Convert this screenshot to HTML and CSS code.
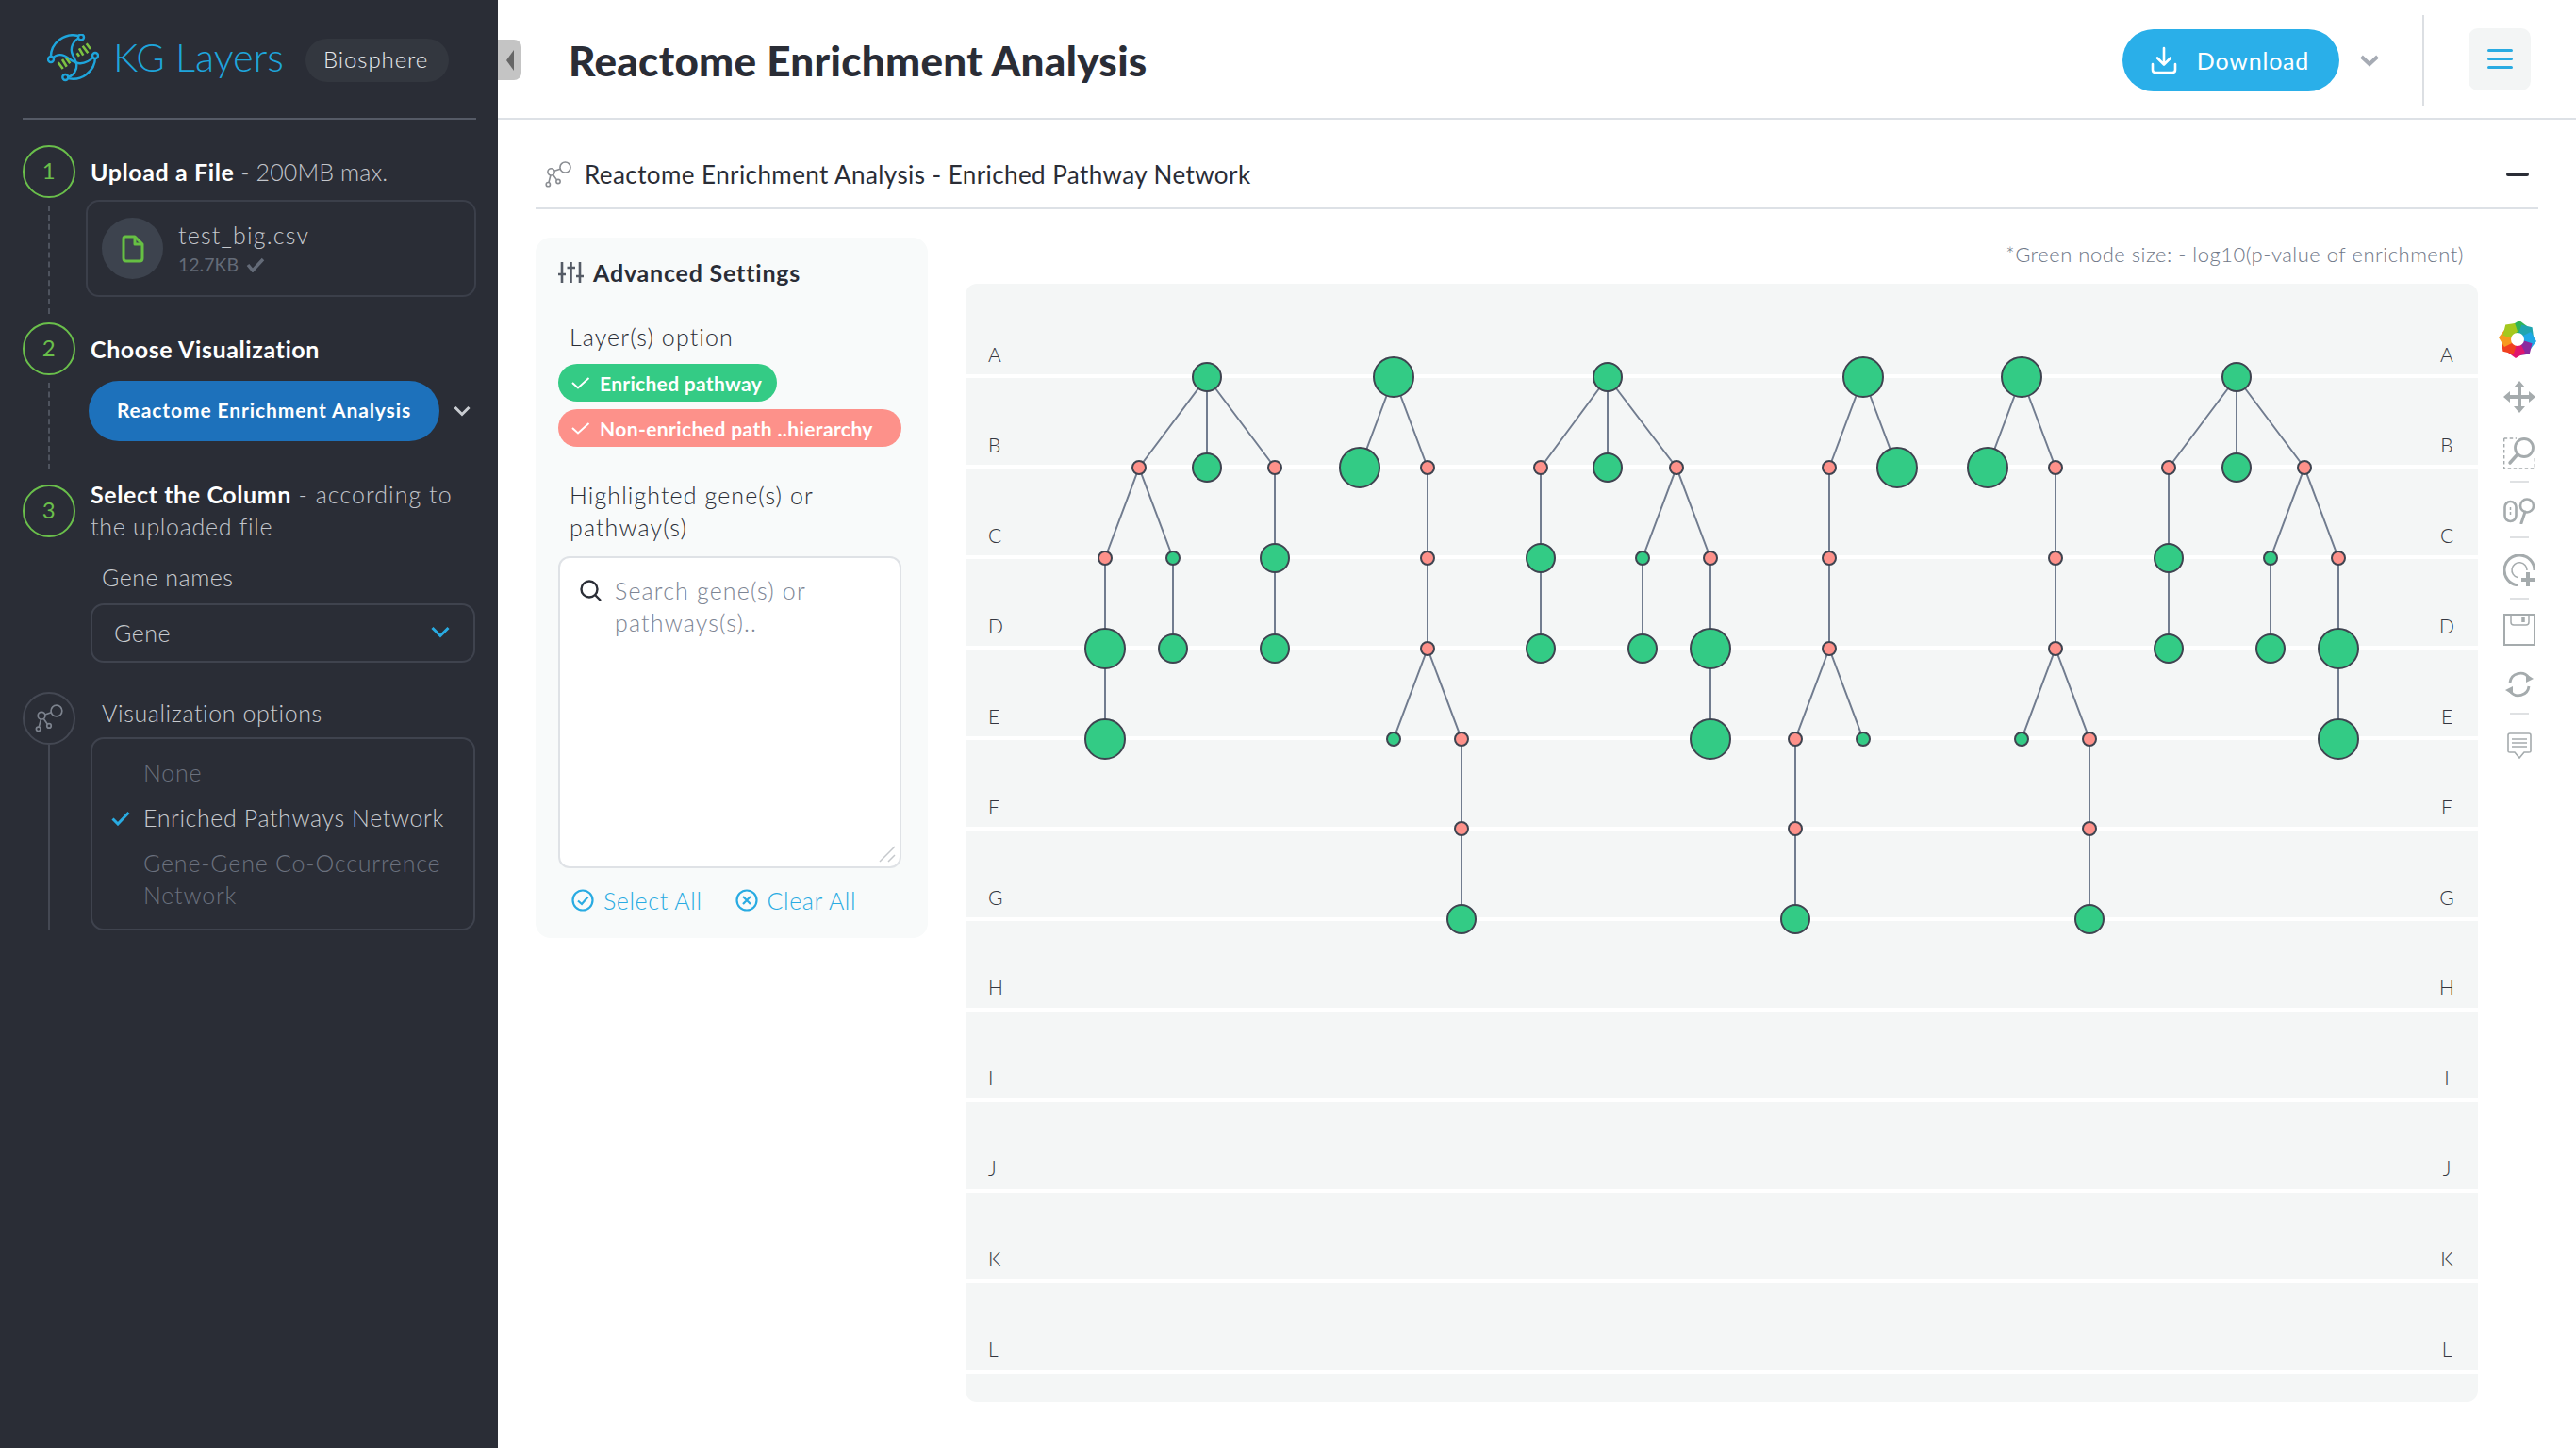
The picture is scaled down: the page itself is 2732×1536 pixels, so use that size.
FILE: index.html
```html
<!DOCTYPE html>
<html lang="en">
<head>
  <meta charset="UTF-8">
  <title>KG Layers</title>
  <link rel="stylesheet" href="styles.css">
</head>
<body>

  <svg class="defs" width="0" height="0">
    <symbol id="net" viewBox="0 0 30 30">
      <circle cx="22" cy="8" r="5.2"/>
      <circle cx="8" cy="12.5" r="3.4"/>
      <circle cx="5" cy="25" r="2"/>
      <circle cx="15" cy="22" r="2"/>
      <path d="M17 9.5L11.3 11.5M7.4 16L5.6 23M10 15.5L13.6 20.5"/>
    </symbol>
  </svg>

  <aside class="sidebar">
    <div class="brand">
      <svg class="logo" viewBox="0 0 55 51">
        <g fill="none" stroke="#1ea5dc" stroke-width="2.4">
          <path d="M4 27A23.500 23.500 0 0 1 36 3"/>
          <path d="M51 23A23.500 23.500 0 0 1 19 46"/>
          <path d="M36 3C27 7 24 15 27 22C30 29 34 33 29 41C27 44 23 46 19 46"/>
          <path d="M4 27C8 23 13 21 18 23C23 25 26 30 33 31C39 32 46 28 51 23"/>
          <circle cx="36" cy="3.500" r="3" fill="#2a2d36"/>
          <circle cx="51" cy="23" r="3" fill="#2a2d36"/>
          <circle cx="4" cy="27" r="3" fill="#2a2d36"/>
          <circle cx="19.300" cy="46" r="3" fill="#2a2d36"/>
        </g>
        <path d="M11.700 30.300L16.700 37M16 27L20.700 34.700M20 25.300L24.300 31.300M31.700 20.300L34 23.700M34 15.300L38.300 22.700M37.700 12.700L43.300 20.300M41.700 10.300L46 16" stroke="#7cc242" stroke-width="2.600" fill="none"/>
      </svg>
      <span class="brand-name">KG Layers</span>
      <span class="brand-tag">Biosphere</span>
    </div>

    <section class="step step-upload">
      <div class="rail">
        <span class="num">1</span>
        <span class="rail-line"></span>
      </div>
      <div class="step-body">
        <p class="step-title step-title-tight"><b>Upload a File</b> - 200MB max.</p>
        <div class="file-box">
          <span class="file-icon">
            <svg width="24" height="30" viewBox="0 0 24 30" fill="none" stroke="#66c043" stroke-width="3" stroke-linejoin="round">
              <path d="M4 2H14L22 10V25Q22 28 19 28H5Q2 28 2 25V4Q2 2 4 2Z"/>
              <path d="M14 2V10H22"/>
            </svg>
          </span>
          <div>
            <div class="file-name">test_big.csv</div>
            <div class="file-size">12.7KB
              <svg width="20" height="16" viewBox="0 0 20 16" fill="none" stroke="#646b78" stroke-width="3.4"><path d="M2 8L7 14L18 2"/></svg>
            </div>
          </div>
        </div>
      </div>
    </section>

    <section class="step step-choose">
      <div class="rail">
        <span class="num">2</span>
        <span class="rail-line"></span>
      </div>
      <div class="step-body">
        <p class="step-title"><b>Choose Visualization</b></p>
        <div class="viz-row">
          <button class="viz-btn">Reactome Enrichment Analysis</button>
          <svg width="18" height="12" viewBox="0 0 18 12" fill="none" stroke="#c9ccd1" stroke-width="3"><path d="M1.5 2L9 9.500L16.500 2"/></svg>
        </div>
      </div>
    </section>

    <section class="step step-column">
      <div class="rail rail-column">
        <span class="num">3</span>
      </div>
      <div class="step-body">
        <p class="step-title step-title-wrap"><b>Select the Column</b> <span class="title-wide">- according to</span><br>the uploaded file</p>
        <p class="field-label">Gene names</p>
        <div class="select-box">
          <span>Gene</span>
          <svg width="20" height="13" viewBox="0 0 20 13" fill="none" stroke="#29abe2" stroke-width="3"><path d="M1.500 2L10 10.500L18.500 2"/></svg>
        </div>
      </div>
    </section>

    <section class="step step-options">
      <div class="rail">
        <span class="num num-gray">
          <svg width="34" height="34"><use href="#net"/></svg>
        </span>
        <span class="rail-solid"></span>
      </div>
      <div class="step-body">
        <p class="field-label field-label-top">Visualization options</p>
        <div class="options-box">
          <div class="opt opt-off"><i></i><span>None</span></div>
          <div class="opt">
            <svg width="20" height="16" viewBox="0 0 20 16" fill="none" stroke="#29abe2" stroke-width="3"><path d="M1.500 8.500L7 14L18.500 2"/></svg>
            <span>Enriched Pathways Network</span>
          </div>
          <div class="opt opt-off"><i></i><span>Gene-Gene Co-Occurrence Network</span></div>
        </div>
      </div>
    </section>
  </aside>

  <main class="main">
    <button class="collapse"><span class="collapse-arrow"></span></button>

    <header class="topbar">
      <h1>Reactome Enrichment Analysis</h1>
      <button class="download">
        <svg width="28" height="30" viewBox="0 0 28 30" fill="none" stroke="#fff" stroke-width="2.600" stroke-linecap="round" stroke-linejoin="round">
          <path d="M14 2V19M7 12.500L14 19.500L21 12.500"/>
          <path d="M2 19V25Q2 28 5 28H23Q26 28 26 25V19"/>
        </svg>
        Download
      </button>
      <svg class="download-more" width="20" height="13" viewBox="0 0 20 13" fill="none" stroke="#a6abb4" stroke-width="4"><path d="M1.500 2L10 10L18.500 2"/></svg>
      <span class="topbar-sep"></span>
      <button class="menu-btn"><i></i><i></i><i></i></button>
    </header>

    <section class="panel">
      <div class="panel-head">
        <svg class="panel-icon" width="32" height="32"><use href="#net"/></svg>
        <h2>Reactome Enrichment Analysis - Enriched Pathway Network</h2>
        <span class="minimize"></span>
      </div>

      <div class="panel-body">
        <div class="settings">
          <div class="settings-title">
            <svg width="27" height="24" viewBox="0 0 27 24" fill="none" stroke="#555b66" stroke-width="2.600">
              <path d="M4 1V23M13.500 1V23M23 1V23"/>
              <path d="M0 14H8M9.500 7H18M19 16H27"/>
            </svg>
            Advanced Settings
          </div>
          <p class="settings-label">Layer(s) option</p>
          <div class="chips">
            <span class="chip chip-green">
              <svg width="20" height="14" viewBox="0 0 20 14" fill="none" stroke="#fff" stroke-width="2"><path d="M1 7L7 12.500L18.500 2"/></svg>
              Enriched pathway
            </span>
            <span class="chip chip-red">
              <svg width="20" height="14" viewBox="0 0 20 14" fill="none" stroke="#fff" stroke-width="2"><path d="M1 7L7 12.500L18.500 2"/></svg>
              Non-enriched path ..hierarchy
            </span>
          </div>
          <p class="settings-label settings-label-wrap">Highlighted gene(s) or pathway(s)</p>
          <div class="search-box">
            <svg width="24" height="24" viewBox="0 0 24 24" fill="none" stroke="#2b2e37" stroke-width="2.400"><circle cx="11" cy="11" r="8.500"/><path d="M17 17L23 23"/></svg>
            <span class="search-hint">Search gene(s) or pathways(s)..</span>
            <svg class="grip" width="18" height="18" viewBox="0 0 18 18" stroke="#c5c8cc" stroke-width="1.500"><path d="M17 1L1 17M17 10L10 17"/></svg>
          </div>
          <div class="select-links">
            <a>
              <svg width="24" height="24" viewBox="0 0 24 24" fill="none" stroke="#29abe2" stroke-width="2.200"><circle cx="12" cy="12" r="10.500"/><path d="M7 12.500L11 16L17.500 8.500"/></svg>
              Select All
            </a>
            <a>
              <svg width="24" height="24" viewBox="0 0 24 24" fill="none" stroke="#29abe2" stroke-width="2.200"><circle cx="12" cy="12" r="10.500"/><path d="M8 8L16 16M16 8L8 16"/></svg>
              Clear All
            </a>
          </div>
        </div>

        <div class="graph-col">
          <p class="graph-note">*Green node size: - log10(p-value of enrichment)</p>
          <div class="graph-card">
            <svg class="graph" width="1604" height="1186" viewBox="1024 301 1604 1186">
              <g class="rows">
                <path d="M1024 399H2628M1024 495H2628M1024 591H2628M1024 687H2628M1024 783H2628M1024 879H2628M1024 975H2628M1024 1071H2628M1024 1167H2628M1024 1263H2628M1024 1359H2628M1024 1455H2628"/>
              </g>
              <g class="labels">
                <text x="1048" y="384">A</text><text x="1048" y="480">B</text><text x="1048" y="576">C</text>
                <text x="1048" y="672">D</text><text x="1048" y="768">E</text><text x="1048" y="864">F</text>
                <text x="1048" y="960">G</text><text x="1048" y="1055">H</text><text x="1048" y="1151">I</text>
                <text x="1048" y="1247">J</text><text x="1048" y="1343">K</text><text x="1048" y="1439">L</text>
              </g>
              <g class="labels labels-right">
                <text x="2595" y="384">A</text><text x="2595" y="480">B</text><text x="2595" y="576">C</text>
                <text x="2595" y="672">D</text><text x="2595" y="768">E</text><text x="2595" y="864">F</text>
                <text x="2595" y="960">G</text><text x="2595" y="1055">H</text><text x="2595" y="1151">I</text>
                <text x="2595" y="1247">J</text><text x="2595" y="1343">K</text><text x="2595" y="1439">L</text>
              </g>

              <!-- edges -->
              <g class="edges">
                <path d="M1280 400L1208 496M1280 400V496M1280 400L1352 496M1208 496L1172 592M1208 496L1244 592M1352 496V688M1172 592V784M1244 592V688"/>
                <path d="M1478 400L1442 496M1478 400L1514 496M1514 496V688M1514 688L1478 784M1514 688L1550 784M1550 784V975"/>
                <path d="M1705 400L1634 496M1705 400V496M1705 400L1778 496M1634 496V688M1778 496L1742 592M1778 496L1814 592M1742 592V688M1814 592V784"/>
                <path d="M1976 400L1940 496M1976 400L2012 496M1940 496V688M1940 688L1904 784M1940 688L1976 784M1904 784V975"/>
                <path d="M2144 400L2108 496M2144 400L2180 496M2180 496V688M2180 688L2144 784M2180 688L2216 784M2216 784V975"/>
                <path d="M2372 400L2300 496M2372 400V496M2372 400L2444 496M2300 496V688M2444 496L2408 592M2444 496L2480 592M2408 592V688M2480 592V784"/>
              </g>

              <!-- pathway nodes, green = enriched -->
              <g class="nodes-green">
                <circle cx="1280" cy="400" r="15"/><circle cx="1280" cy="496" r="15"/><circle cx="1244" cy="592" r="7"/>
                <circle cx="1352" cy="592" r="15"/><circle cx="1172" cy="688" r="21"/><circle cx="1244" cy="688" r="15"/>
                <circle cx="1352" cy="688" r="15"/><circle cx="1172" cy="784" r="21"/>
                <circle cx="1478" cy="400" r="21"/><circle cx="1442" cy="496" r="21"/><circle cx="1478" cy="784" r="7"/><circle cx="1550" cy="975" r="15"/>
                <circle cx="1705" cy="400" r="15"/><circle cx="1705" cy="496" r="15"/><circle cx="1634" cy="592" r="15"/><circle cx="1634" cy="688" r="15"/>
                <circle cx="1742" cy="592" r="7"/><circle cx="1742" cy="688" r="15"/><circle cx="1814" cy="688" r="21"/><circle cx="1814" cy="784" r="21"/>
                <circle cx="1976" cy="400" r="21"/><circle cx="2012" cy="496" r="21"/><circle cx="1976" cy="784" r="7"/><circle cx="1904" cy="975" r="15"/>
                <circle cx="2144" cy="400" r="21"/><circle cx="2108" cy="496" r="21"/><circle cx="2144" cy="784" r="7"/><circle cx="2216" cy="975" r="15"/>
                <circle cx="2372" cy="400" r="15"/><circle cx="2372" cy="496" r="15"/><circle cx="2300" cy="592" r="15"/><circle cx="2300" cy="688" r="15"/>
                <circle cx="2408" cy="592" r="7"/><circle cx="2408" cy="688" r="15"/><circle cx="2480" cy="688" r="21"/><circle cx="2480" cy="784" r="21"/>
              </g>
              <g class="nodes-red">
                <circle cx="1208" cy="496" r="7"/><circle cx="1352" cy="496" r="7"/><circle cx="1172" cy="592" r="7"/>
                <circle cx="1514" cy="496" r="7"/><circle cx="1514" cy="592" r="7"/><circle cx="1514" cy="688" r="7"/><circle cx="1550" cy="784" r="7"/><circle cx="1550" cy="879" r="7"/>
                <circle cx="1634" cy="496" r="7"/><circle cx="1778" cy="496" r="7"/><circle cx="1814" cy="592" r="7"/>
                <circle cx="1940" cy="496" r="7"/><circle cx="1940" cy="592" r="7"/><circle cx="1940" cy="688" r="7"/><circle cx="1904" cy="784" r="7"/><circle cx="1904" cy="879" r="7"/>
                <circle cx="2180" cy="496" r="7"/><circle cx="2180" cy="592" r="7"/><circle cx="2180" cy="688" r="7"/><circle cx="2216" cy="784" r="7"/><circle cx="2216" cy="879" r="7"/>
                <circle cx="2300" cy="496" r="7"/><circle cx="2444" cy="496" r="7"/><circle cx="2480" cy="592" r="7"/>
              </g>
            </svg>
          </div>
        </div>

        <div class="tools">
          <svg class="tool-wheel" width="40" height="40" viewBox="-20 -20 40 40">
            <path d="M-8 -14L2 -20L10 -14L6 -6L-4 -6Z" fill="#2fb457"/>
            <path d="M-8 -14L2 -20L10 -14L6 -6L-4 -6Z" fill="#1fa5b0" transform="rotate(45)"/>
            <path d="M-8 -14L2 -20L10 -14L6 -6L-4 -6Z" fill="#1fa8e6" transform="rotate(90)"/>
            <path d="M-8 -14L2 -20L10 -14L6 -6L-4 -6Z" fill="#8a2a9e" transform="rotate(135)"/>
            <path d="M-8 -14L2 -20L10 -14L6 -6L-4 -6Z" fill="#e0156e" transform="rotate(180)"/>
            <path d="M-8 -14L2 -20L10 -14L6 -6L-4 -6Z" fill="#f0401f" transform="rotate(225)"/>
            <path d="M-8 -14L2 -20L10 -14L6 -6L-4 -6Z" fill="#f79a1e" transform="rotate(270)"/>
            <path d="M-8 -14L2 -20L10 -14L6 -6L-4 -6Z" fill="#a5c81e" transform="rotate(315)"/>
            <circle r="7" fill="#fff"/>
          </svg>
          <svg class="tool-move" width="34" height="34" viewBox="0 0 34 34" fill="#a5abad">
            <path d="M17 0L23 7H19V15H27V11L34 17L27 23V19H19V27H23L17 34L11 27H15V19H7V23L0 17L7 11V15H15V7H11Z"/>
          </svg>
          <svg class="tool-zoom" width="34" height="34" viewBox="0 0 34 34" fill="none" stroke="#a5abad">
            <path d="M.7 1H14M.7 1V33H33.300V22M.7 33" stroke-width="1.400" stroke-dasharray="3.500 2.500"/>
            <circle cx="22" cy="11" r="9.500" stroke-width="2.800"/>
            <path d="M15 18L7 27" stroke-width="3.400" stroke-linecap="round"/>
          </svg>
          <i class="tool-sep tool-sep-tight"></i>
          <svg class="tool-scroll" width="34" height="28" viewBox="0 0 34 28" fill="none" stroke="#a5abad">
            <rect x="1.500" y="4" width="12" height="21" rx="6" stroke-width="2.600"/>
            <path d="M7.500 10V19" stroke-width="1.500" stroke-dasharray="3 2"/>
            <circle cx="25" cy="8.500" r="7" stroke-width="2.600"/>
            <path d="M23 15L19 27" stroke-width="3" stroke-linecap="round"/>
          </svg>
          <i class="tool-sep"></i>
          <svg class="tool-wheelzoom" width="34" height="34" viewBox="0 0 34 34" fill="none" stroke="#a5abad">
            <path d="M33 17A16 16 0 1 0 15 32.800" stroke-width="3"/>
            <path d="M25 17A8 8 0 1 0 15 24.500" stroke-width="1.500"/>
            <path d="M26 19V34M19 27H34" stroke-width="4"/>
          </svg>
          <i class="tool-sep tool-sep-save"></i>
          <svg class="tool-save" width="34" height="34" viewBox="0 0 34 34" fill="none" stroke="#a5abad">
            <rect x="1" y="1" width="32" height="32" stroke-width="2"/>
            <path d="M8 1V9Q8 12 11 12H24Q27 12 27 9V1" stroke-width="1.500"/>
            <path d="M21 4V9" stroke-width="3.500"/>
          </svg>
          <svg class="tool-reset" width="32" height="30" viewBox="0 0 32 30" fill="none" stroke="#a5abad" stroke-width="2.800">
            <path d="M6 13A11 11 0 0 1 26 8"/>
            <path d="M26 17A11 11 0 0 1 6 22"/>
            <path d="M31 9L23 13L23 4Z" fill="#a5abad" stroke="none"/>
            <path d="M1 21L9 17L9 26Z" fill="#a5abad" stroke="none"/>
          </svg>
          <i class="tool-sep tool-sep-last"></i>
          <svg class="tool-hover" width="26" height="28" viewBox="0 0 26 28" fill="none" stroke="#a5abad">
            <path d="M3 1H23Q25 1 25 3V20Q25 21 23 21H18L13 27L8 21H3Q1 21 1 20V3Q1 1 3 1Z" stroke-width="1.600"/>
            <path d="M5 7H21M5 11H21M5 15H21" stroke-width="1.500"/>
          </svg>
        </div>
      </div>
    </section>
  </main>

</body>
</html>
```

FILE: styles.css
```css
* {
  box-sizing: border-box;
}

html, body {
  margin: 0;
  height: 100%;
}

body {
  display: flex;
  min-height: 1536px;
  overflow: hidden;
  font-family: Lato, "Open Sans", sans-serif;
  background: #fff;
  color: #2a2d36;
}

p, h1, h2 {
  margin: 0;
}

button {
  font-family: inherit;
  border: none;
  padding: 0;
}

.defs {
  position: absolute;
}

#net, use {
  fill: none;
  stroke: currentColor;
  stroke-width: 1.5;
}

/* sidebar */
.sidebar {
  width: 528px;
  flex-shrink: 0;
  background: #2a2d36;
  padding: 0 23px 0 24px;
  color: #d5d8dd;
  font-weight: 300;
  font-size: 25px;
  letter-spacing: .5px;
}

.brand {
  height: 127px;
  padding: 33px 0 0 26px;
  display: flex;
  align-items: flex-start;
  border-bottom: 2px solid #555a66;
  margin-bottom: 27px;
}

.logo {
  width: 55px;
  height: 51px;
  margin: 3px 15px 0 0;
}

.brand-name {
  color: #1ea5dc;
  font-size: 41.5px;
  line-height: 54px;
  letter-spacing: 0;
  width: 204px;
  flex-shrink: 0;
}

.brand-tag {
  margin-top: 8px;
  height: 46px;
  line-height: 44px;
  padding: 0 19px;
  width: 152px;
  border-radius: 23px;
  background: #33373f;
  color: #e7e9ec;
  font-size: 24px;
  letter-spacing: .9px;
}

.step {
  display: flex;
}

.step-upload {
  height: 188px;
}

.step-choose {
  height: 165px;
}

.step-column {
  height: 196px;
  margin-bottom: 31px;
}

.rail {
  width: 56px;
  flex-shrink: 0;
  display: flex;
  flex-direction: column;
  align-items: center;
}

.rail-column {
  padding-top: 7px;
}

.num {
  width: 56px;
  height: 56px;
  flex-shrink: 0;
  border: 2px solid #6abf4b;
  border-radius: 50%;
  color: #6abf4b;
  font-size: 24px;
  font-weight: 400;
  line-height: 50px;
  text-align: center;
}

.num-gray {
  border-color: #444853;
  color: #7d838e;
  display: flex;
  align-items: center;
  justify-content: center;
}

.rail-line {
  flex: 1;
  margin: 8px 0 9px;
  border-left: 2px dashed #4e535e;
}

.rail-solid {
  flex: 1;
  height: 200px;
  border-left: 2px solid #444853;
}

.step-body {
  flex: 1;
  margin-left: 11px;
  min-width: 0;
}

.step-title {
  padding: 11px 0 2px 5px;
  line-height: 34px;
  color: #c3c6cc;
}

.step-title b {
  color: #fff;
  font-weight: 700;
  letter-spacing: .6px;
}

.step-title-tight {
  letter-spacing: .1px;
}

.step-title-wrap {
  padding-top: 0;
  padding-bottom: 0;
  letter-spacing: .7px;
}

.title-wide {
  letter-spacing: 1.050px;
}

.file-box {
  margin-top: 11px;
  height: 103px;
  border: 2px solid #3b3f4a;
  border-radius: 14px;
  padding: 18px 15px;
  display: flex;
  align-items: center;
  gap: 16px;
}

.file-icon {
  width: 65px;
  height: 65px;
  border-radius: 50%;
  background: #3d434e;
  display: flex;
  align-items: center;
  justify-content: center;
}

.file-name {
  line-height: 34px;
  color: #c6c9ce;
  letter-spacing: 1.2px;
}

.file-size {
  font-size: 19.500px;
  font-weight: 400;
  line-height: 30px;
  color: #646b78;
  display: flex;
  align-items: center;
  gap: 8px;
  letter-spacing: 0;
}

.viz-row {
  margin: 15px 0 0 3px;
  display: flex;
  align-items: center;
  gap: 15px;
}

.viz-btn {
  width: 372px;
  height: 64px;
  padding-bottom: 4px;
  border-radius: 32px;
  background: #1d71bb;
  color: #fff;
  font-size: 21px;
  font-weight: 700;
  letter-spacing: .9px;
}

.field-label {
  padding-left: 17px;
  margin: 20px 0 11px;
  line-height: 34px;
  color: #c8cbd0;
}

.field-label-top {
  margin: 5px 0 9px;
  letter-spacing: .6px;
}

.select-box {
  margin: 0 1px 0 5px;
  height: 63px;
  border: 2px solid #3f434e;
  border-radius: 14px;
  padding: 0 25px 2px 23px;
  display: flex;
  align-items: center;
  justify-content: space-between;
  color: #c8cbd0;
}

.options-box {
  margin: 0 1px 0 5px;
  height: 205px;
  border: 2px solid #3f434e;
  border-radius: 14px;
  padding: 18px 20px 0 20px;
  display: flex;
  flex-direction: column;
  gap: 14px;
}

.opt {
  display: flex;
  align-items: flex-start;
  gap: 14px;
  line-height: 34px;
  color: #c8cbd0;
  letter-spacing: .6px;
}

.opt svg {
  margin-top: 10px;
  flex-shrink: 0;
}

.opt i {
  width: 20px;
  flex-shrink: 0;
}

.opt-off {
  color: #6b717e;
  letter-spacing: .8px;
}

/* main */
.main {
  flex: 1;
  min-width: 0;
  position: relative;
}

.collapse {
  position: absolute;
  left: 0;
  top: 42px;
  width: 25px;
  height: 43px;
  background: #c4c4c4;
  border-radius: 0 8px 8px 0;
  display: flex;
  align-items: center;
  justify-content: center;
}

.collapse-arrow {
  width: 0;
  height: 0;
  border-style: solid;
  border-width: 11px 8px 11px 0;
  border-color: transparent #666 transparent transparent;
}

.topbar {
  height: 127px;
  border-bottom: 2px solid #dde1e6;
  display: flex;
  align-items: center;
  padding-left: 75px;
}

.topbar h1 {
  flex: 1;
  font-size: 44px;
  font-weight: 900;
  letter-spacing: .3px;
  color: #2a2d36;
  padding-top: 2px;
}

.download {
  width: 230px;
  height: 66px;
  border-radius: 33px;
  background: #2aafe9;
  color: #fff;
  font-size: 25px;
  letter-spacing: .8px;
  display: flex;
  align-items: center;
  justify-content: center;
  gap: 21px;
  margin-top: 3px;
  padding-right: 2px;
}

.download-more {
  margin: 3px 0 0 22px;
}

.topbar-sep {
  width: 2px;
  height: 96px;
  background: #dcdfe3;
  margin: 3px 0 0 46px;
}

.menu-btn {
  width: 66px;
  height: 66px;
  margin: 0 48px 0 47px;
  background: #f3f5f5;
  border-radius: 10px;
  display: flex;
  flex-direction: column;
  align-items: center;
  justify-content: center;
  gap: 6px;
}

.menu-btn i {
  width: 27px;
  height: 3px;
  border-radius: 2px;
  background: #29abe2;
}

.panel {
  padding: 0 40px;
}

.panel-head {
  height: 95px;
  border-bottom: 2px solid #dde1e6;
  display: flex;
  align-items: center;
  padding: 22px 10px 0 8px;
}

.panel-icon {
  color: #8a8d92;
  margin-right: 12px;
}

.panel-head h2 {
  flex: 1;
  font-size: 26px;
  font-weight: 400;
  letter-spacing: .42px;
}

.minimize {
  width: 24px;
  height: 4px;
  border-radius: 2px;
  background: #2a2d36;
}

.panel-body {
  display: flex;
  align-items: flex-start;
  gap: 40px;
  padding-top: 30px;
}

.settings {
  width: 416px;
  height: 743px;
  flex-shrink: 0;
  background: #f8fafa;
  border-radius: 16px;
  padding: 21px 24px;
  font-size: 25px;
  font-weight: 300;
  letter-spacing: .5px;
}

.settings-title {
  display: flex;
  align-items: center;
  gap: 10px;
  height: 32px;
  font-weight: 700;
  letter-spacing: .8px;
}

.settings-label {
  padding-left: 12px;
  margin-top: 35px;
  line-height: 34px;
  letter-spacing: 1.100px;
}

.chips {
  margin-top: 12px;
  display: flex;
  flex-direction: column;
  align-items: flex-start;
  gap: 8px;
}

.chip {
  height: 40px;
  border-radius: 20px;
  padding: 0 0 0 14px;
  display: flex;
  align-items: center;
  gap: 10px;
  color: #fff;
  font-size: 21px;
  font-weight: 700;
  letter-spacing: .3px;
}

.chip-green {
  width: 232px;
  background: #34cb85;
}

.chip-red {
  width: 364px;
  background: #fd918a;
  letter-spacing: .4px;
}

.settings-label-wrap {
  margin-top: 34px;
  padding-right: 20px;
}

.search-box {
  position: relative;
  margin-top: 14px;
  height: 331px;
  width: 364px;
  background: #fff;
  border: 2px solid #dfe2e6;
  border-radius: 12px;
  padding: 19px 20px;
  display: flex;
  align-items: flex-start;
  gap: 14px;
}

.search-box > svg:first-child {
  flex-shrink: 0;
  margin-top: 3px;
}

.search-hint {
  line-height: 34px;
  color: #7d8594;
  margin-top: -2px;
  letter-spacing: 1.150px;
}

.grip {
  position: absolute;
  right: 4px;
  bottom: 4px;
}

.select-links {
  margin-top: 20px;
  padding-left: 14px;
  display: flex;
  gap: 35px;
  color: #29abe2;
  letter-spacing: .6px;
}

.select-links a {
  display: flex;
  align-items: center;
  gap: 10px;
  line-height: 28px;
}

.graph-col {
  width: 1604px;
  flex-shrink: 0;
}

.graph-note {
  height: 49px;
  padding: 4px 15px 0 0;
  text-align: right;
  font-size: 22px;
  font-weight: 300;
  color: #6f7888;
  line-height: 28px;
  letter-spacing: .5px;
}

.graph-card {
  height: 1186px;
  background: #f4f6f6;
  border-radius: 12px;
  overflow: hidden;
}

.graph {
  display: block;
}

.rows path {
  stroke: #fff;
  stroke-width: 4;
  fill: none;
}

.labels text {
  font-size: 21px;
  font-weight: 300;
  fill: #333640;
}

.labels-right text {
  text-anchor: middle;
}

.edges path {
  stroke: #717c8f;
  stroke-width: 2;
  fill: none;
}

.nodes-green circle,
.nodes-red circle {
  stroke: #3f4450;
  stroke-width: 2;
}

.nodes-green circle {
  fill: #33cb85;
}

.nodes-red circle {
  fill: #fe918a;
}

.tools {
  margin: 88px 0 0 -13px;
  width: 34px;
  flex-shrink: 0;
  display: flex;
  flex-direction: column;
  align-items: center;
}

.tools svg {
  flex-shrink: 0;
  display: block;
}

.tool-wheel {
  margin-left: -4px;
}

.tool-move {
  margin-top: 24px;
}

.tool-zoom {
  margin-top: 26px;
}

.tool-sep {
  width: 20px;
  height: 2px;
  background: #dfe1e3;
  margin: 13px 0 17px;
}

.tool-sep-tight {
  margin: 12px 0 16px;
}

.tool-sep-save {
  margin: 12px 0 15px;
}

.tool-reset {
  margin-top: 26px;
}

.tool-sep-last {
  margin: 15px 0 19px;
}
```
